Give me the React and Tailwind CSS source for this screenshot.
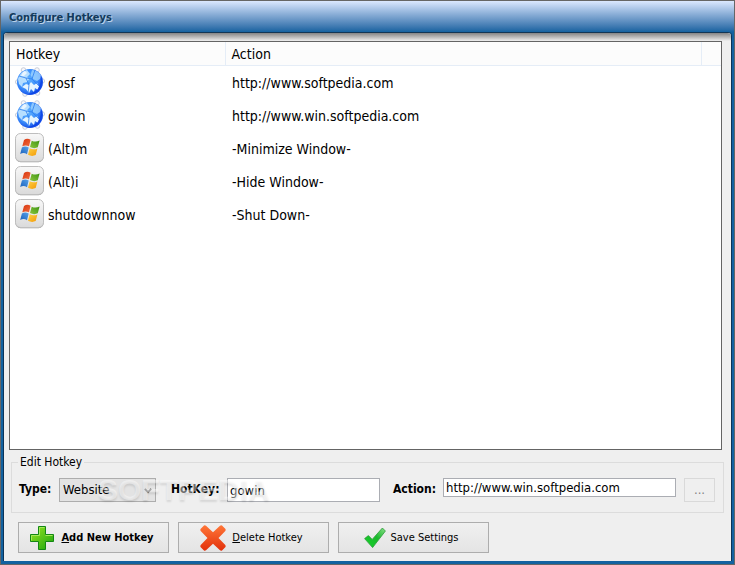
const hotkeys = [
    { key: 'gosf', action: 'http://www.softpedia.com', type: 'website' },
    { key: 'gowin', action: 'http://www.win.softpedia.com', type: 'website' },
    { key: '(Alt)m', action: '-Minimize Window-', type: 'windows' },
    { key: '(Alt)i', action: '-Hide Window-', type: 'windows' },
    { key: 'shutdownnow', action: '-Shut Down-', type: 'windows' }
];

function GlobeIcon() {
    return (
        <svg width="30" height="30" viewBox="0 0 30 30" className="block shrink-0">
            <defs>
                <radialGradient id="ocean" cx="0.4" cy="0.4" r="0.65">
                    <stop offset="0" stopColor="#62b4ff" />
                    <stop offset="0.6" stopColor="#3a8dfa" />
                    <stop offset="1" stopColor="#0f45e6" />
                </radialGradient>
            </defs>
            <g fill="#f7f8fb" stroke="#bcc3d2" strokeWidth="0.8">
                <circle cx="8.5" cy="3" r="2.3" />
                <circle cx="22" cy="3" r="2.3" />
                <circle cx="2.6" cy="15" r="2.2" />
                <circle cx="27.4" cy="14" r="2.2" />
                <circle cx="10" cy="27" r="2.3" />
                <circle cx="22.5" cy="26" r="2.3" />
            </g>
            <circle cx="15" cy="15" r="13" fill="url(#ocean)" />
            <path d="M12 3 Q5 5 3 12 L4 17 L7 20 L8 16 L12 15 L14 12 L12 10 L15 7Z" fill="#c9eaff" opacity="0.85" />
            <path d="M17 3 L15.5 8 L18 12 L22 14 L25 12 L26.5 9 Q23 3.5 17 3Z" fill="#a6d8ff" opacity="0.75" />
            <path d="M7 20 L11 17 L14 18 L16 15 L19 18 L22 16 L24 19 L23 23 L20 21 L19 25 L16 22 L14 26 L11 22Z" fill="#eefaff" opacity="0.95" />
            <path d="M4 9 L11 11 L14 18 L13 27 M20 3 L17 12 L24 19 M11 11 L17 12" stroke="#2c7ef0" strokeWidth="0.8" fill="none" />
            <path d="M8 5 L10 4 L12 6 L9 9 L6 9Z" fill="#fff" opacity="0.7" />
            <path d="M25.5 8 Q29 15 25 22 Q20 28 12 27.5 Q22 25 24.5 19 Q26.5 14 25.5 8Z" fill="#0b3fe4" opacity="0.75" />
        </svg>
    );
}

function WindowsIcon() {
    return (
        <svg width="30" height="30" viewBox="0 0 30 30" className="block shrink-0">
            <defs>
                <linearGradient id="tile" x1="0" y1="0" x2="0" y2="1">
                    <stop offset="0" stopColor="#f8f8f8" />
                    <stop offset="1" stopColor="#dadada" />
                </linearGradient>
                <linearGradient id="paneRed" x1="0" y1="0" x2="1" y2="1">
                    <stop offset="0" stopColor="#d8350f" />
                    <stop offset="1" stopColor="#ee6a3c" />
                </linearGradient>
                <linearGradient id="paneGreen" x1="0" y1="1" x2="1" y2="0">
                    <stop offset="0" stopColor="#8cc63c" />
                    <stop offset="1" stopColor="#3c9412" />
                </linearGradient>
                <linearGradient id="paneBlue" x1="0" y1="1" x2="1" y2="0">
                    <stop offset="0" stopColor="#1c62bc" />
                    <stop offset="1" stopColor="#56a2ea" />
                </linearGradient>
                <linearGradient id="paneYellow" x1="0" y1="0" x2="1" y2="1">
                    <stop offset="0" stopColor="#ffd044" />
                    <stop offset="1" stopColor="#f39a06" />
                </linearGradient>
            </defs>
            <rect x="0.5" y="1.2" width="28" height="28" rx="5" fill="#9a9a9a" />
            <rect x="0.5" y="0.5" width="28" height="28" rx="5" fill="url(#tile)" stroke="#bebebe" />
            <path d="M9 7 Q12.2 4.7 15.6 6.8 L14 13.3 Q10.6 11.5 7.3 13.3Z" fill="url(#paneRed)" />
            <path d="M16.7 7.7 Q20.6 9.5 24.6 7.5 L22.8 14.3 Q19 16.1 15 14Z" fill="url(#paneGreen)" />
            <path d="M6.9 14.5 Q10.3 12.5 13.7 14.6 L12 21.2 Q8.6 19.1 5.2 21.1Z" fill="url(#paneBlue)" />
            <path d="M14.7 15.3 Q18.6 17.3 22.4 15.4 L20.7 22.1 Q16.8 23.9 13 21.8Z" fill="url(#paneYellow)" />
        </svg>
    );
}

function PlusIcon() {
    return (
        <svg width="26" height="26" viewBox="0 0 26 26" className="block shrink-0">
            <defs>
                <linearGradient id="plus" x1="0" y1="0" x2="1" y2="1">
                    <stop offset="0" stopColor="#9be622" />
                    <stop offset="1" stopColor="#18a30d" />
                </linearGradient>
            </defs>
            <path d="M9.5 1.5h7v8h8v7h-8v8h-7v-8h-8v-7h8z" fill="url(#plus)" stroke="#138713" strokeLinejoin="round" />
            <path d="M10.5 10.5v-8h5M2.5 15.5v-5h8M16.5 10.5h7" fill="none" stroke="#a6e85a" />
        </svg>
    );
}

function CrossIcon() {
    return (
        <svg width="26" height="26" viewBox="0 0 26 26" className="block shrink-0">
            <defs>
                <linearGradient id="cross" x1="0" y1="0" x2="0" y2="1">
                    <stop offset="0" stopColor="#ff7638" />
                    <stop offset="1" stopColor="#e2300a" />
                </linearGradient>
            </defs>
            <path
                d="M4 .6Q5 0 6 .8L13 7.2L20 .8Q21 0 22 .6L25.5 4Q26 5 25.3 6L18.5 13L25.3 20Q26 21 25.5 22L22 25.4Q21 26 20 25.2L13 18.8L6 25.2Q5 26 4 25.4L.5 22Q0 21 .7 20L7.5 13L.7 6Q0 5 .5 4Z"
                fill="url(#cross)"
            />
        </svg>
    );
}

function CheckIcon() {
    return (
        <svg width="22" height="22" viewBox="0 0 22 22" className="block shrink-0">
            <defs>
                <linearGradient id="check" x1="0" y1="1" x2="1" y2="0">
                    <stop offset="0" stopColor="#16d42a" />
                    <stop offset="0.55" stopColor="#19b92b" />
                    <stop offset="1" stopColor="#8be08a" />
                </linearGradient>
            </defs>
            <path d="M.6 11.6L4.4 8.6L8.2 12.4L18.4 1L21.4 4L8.6 20.6Z" fill="url(#check)" stroke="#2b9c38" strokeWidth="0.8" strokeLinejoin="round" />
        </svg>
    );
}

const buttonClass =
    'flex h-[31px] w-[151px] items-center justify-center border border-[#adadad] bg-linear-to-b from-[#f0f0f0] to-[#e4e4e4] pr-1 text-[11px] text-black';
const inputClass = 'min-w-0 border border-[#abadb3] bg-white px-[2px] text-[13px] text-black outline-none';

export default function App() {
    return (
        <div className="flex min-h-screen flex-col border border-[#666666] bg-[#1362a0] font-['DejaVu_Sans_Condensed','Noto_Sans',sans-serif] text-xs text-black">
            <header className="flex h-[31px] items-center bg-linear-to-b from-[#dbe8ff] to-[#1362a0] px-2 pt-1">
                <h1 className="text-[11px] font-bold text-[#123a5c] [text-shadow:1px_1px_0_#bcd3ea]">Configure Hotkeys</h1>
            </header>

            <main className="mx-[2px] mb-[3px] flex grow flex-col rounded-t-sm border-x border-t border-x-[#0b3358] border-t-[#123655] bg-[#efefef]">
                <div className="h-2 rounded-t-sm bg-linear-to-b from-[#858585] to-[#efefef]" />

                {/* Hotkey list */}
                <div className="mr-[9px] ml-[5px] grow border border-[#646464] bg-white">
                    <table className="w-full table-fixed border-collapse text-left text-sm">
                        <colgroup>
                            <col className="w-[215px]" />
                            <col />
                            <col className="w-5" />
                        </colgroup>
                        <thead>
                            <tr className="h-[23px] border-b border-[#e5edf7] bg-[#fcfcfc]">
                                <th className="border-r border-[#e5edf7] px-1.5 pt-[2px] font-normal">Hotkey</th>
                                <th className="border-r border-[#e5edf7] px-1.5 pt-[2px] font-normal">Action</th>
                                <th />
                            </tr>
                        </thead>
                        <tbody>
                            {hotkeys.map((hotkey) => (
                                <tr key={hotkey.key} className="h-[33px]">
                                    <td className="pl-[5px]">
                                        <div className="flex items-center gap-[3px]">
                                            {hotkey.type === 'website' ? <GlobeIcon /> : <WindowsIcon />}
                                            <span className="pt-[2px]">{hotkey.key}</span>
                                        </div>
                                    </td>
                                    <td className="px-[7px] pt-[2px]">{hotkey.action}</td>
                                    <td />
                                </tr>
                            ))}
                        </tbody>
                    </table>
                </div>

                {/* Edit form */}
                <fieldset className="mx-[7px] mt-1 border border-[#dcdcdc] pb-2.5">
                    <legend className="ml-1.5 px-[2px] leading-4">Edit Hotkey</legend>
                    <div className="relative flex items-start pt-2 pr-2 pl-[7px]">
                        <label htmlFor="type" className="w-10 leading-[22px] font-bold">Type:</label>
                        <div className="relative w-[97px]">
                            <select id="type" defaultValue="Website" className="h-6 w-full appearance-none border border-[#adadad] bg-[#e3e3e3] px-[3px] text-[13px] text-black">
                                <option>Website</option>
                                <option>Windows</option>
                            </select>
                            <svg width="8" height="6" viewBox="0 0 8 6" className="pointer-events-none absolute top-[10px] right-1">
                                <path d="M0.8 0.8L4 4.2L7.2 0.8" fill="none" stroke="#606060" strokeWidth="1.7" />
                            </svg>
                        </div>
                        <label htmlFor="hotkey" className="ml-[15px] w-14 leading-[22px] font-bold">HotKey:</label>
                        <input id="hotkey" defaultValue="gowin" className={`${inputClass} h-6 w-[153px]`} />
                        <label htmlFor="action" className="ml-[13px] w-[50px] leading-[22px] font-bold">Action:</label>
                        <input id="action" defaultValue="http://www.win.softpedia.com" className={`${inputClass} h-[19px] flex-1`} />
                        <button type="button" disabled className="ml-2 h-6 w-[31px] border border-[#d9d9d9] text-[13px] leading-5 text-[#838383]">...</button>
                        <span className="pointer-events-none absolute top-2 left-[86px] font-['Liberation_Sans',sans-serif] text-3xl leading-6 font-bold text-white/45 [text-shadow:0_2px_2px_rgb(0_0_0/0.1)]">
                            SOFTPEDIA
                        </span>
                    </div>
                </fieldset>

                <div className="flex gap-[9px] px-[14px] pt-[9px] pb-2">
                    <button type="button" className={`${buttonClass} gap-1.5 font-bold`}>
                        <PlusIcon />
                        <span className="pt-[2px]"><u>A</u>dd New Hotkey</span>
                    </button>
                    <button type="button" className={`${buttonClass} gap-1.5`}>
                        <CrossIcon />
                        <span className="pt-[2px]"><u>D</u>elete Hotkey</span>
                    </button>
                    <button type="button" className={`${buttonClass} gap-1`}>
                        <CheckIcon />
                        <span className="pt-[2px]">Save Settings</span>
                    </button>
                </div>
            </main>
        </div>
    );
}
